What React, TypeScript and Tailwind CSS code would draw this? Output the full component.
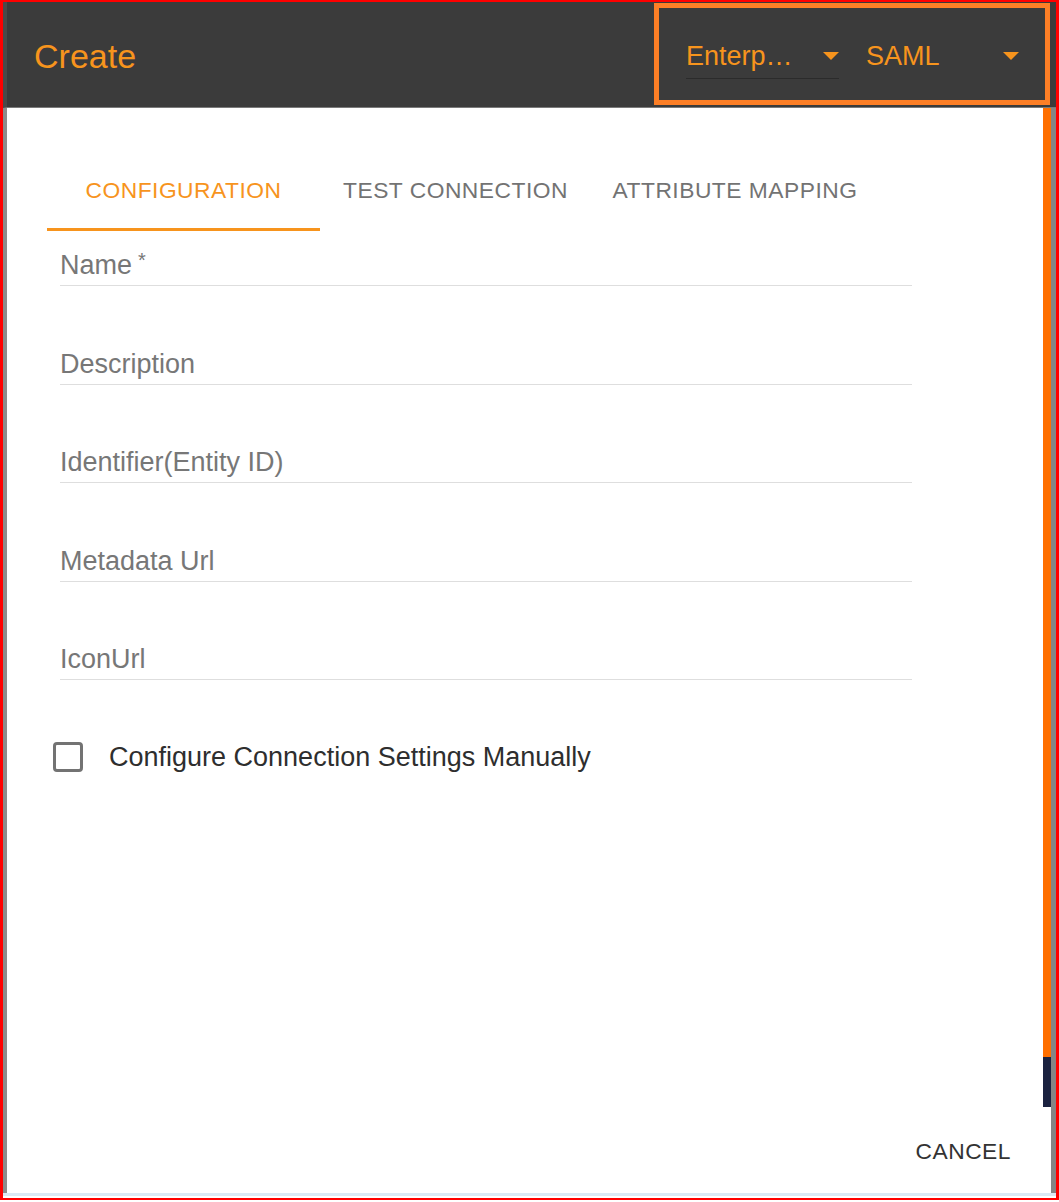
import React from 'react';

const ORANGE = '#f7941d';

function Caret() {
  return (
    <svg width="16" height="8" viewBox="0 0 16 8" className="shrink-0">
      <polygon points="0,0 16,0 8,8" fill={ORANGE} />
    </svg>
  );
}

function HeaderSelect({ value, underline }: { value: string; underline?: boolean }) {
  return (
    <div className={`mt-[4px] flex h-[46px] w-[153px] items-center justify-between ${underline ? 'border-b border-[#2b2b2b]' : ''}`}>
      <span className="whitespace-nowrap text-[27px] leading-[30px] text-[#f7941d]">{value}</span>
      <Caret />
    </div>
  );
}

function Field({ label, required, first }: { label: string; required?: boolean; first?: boolean }) {
  return (
    <div className={`flex flex-col justify-end ${first ? 'h-[55px]' : 'h-[98.5px]'}`}>
      <div className="mb-[5px] text-[27px] leading-[30px] text-[#777777]">
        {label}
        {required && <span className="ml-[6px] align-top text-[20px] leading-[20px]">*</span>}
      </div>
      <div className="h-px w-[852px] bg-[#dedede]" />
    </div>
  );
}

const tabs = [
  { label: 'CONFIGURATION', width: 'w-[273px]', active: true },
  { label: 'TEST CONNECTION', width: 'w-[271px]', active: false },
  { label: 'ATTRIBUTE MAPPING', width: 'w-[288px]', active: false },
];

export default function App() {
  return (
    <div
      className="flex h-[1200px] w-[1059px] flex-col border-b-2 border-l-[3px] border-r-[3px] border-t-2 border-[#ff0000] bg-white"
      style={{ fontFamily: '"Liberation Sans", Arial, sans-serif' }}
    >
      {/* header bar */}
      <header className="flex h-[106px] shrink-0 items-start justify-between border-b border-[#7a7a7a] border-l-[4px] border-l-[#4a4a4a] bg-[#3b3b3b]">
        <h1 className="self-center pl-[27px] pt-[3px] text-[34px] leading-[40px] text-[#f7941d]">Create</h1>
        <div className="mr-[6px] mt-[1px] flex h-[102px] items-center gap-[27px] border-[5px] border-[#fd7f26] pl-[27px] pr-[26px]">
          <HeaderSelect value="Enterp…" underline />
          <HeaderSelect value="SAML" />
        </div>
      </header>

      <div className="flex min-h-0 flex-1">
        <div className="w-[4px] shrink-0 bg-[#8c8c8c]" />

        <main className="relative flex flex-1 flex-col">
          <div className="ml-[40px] mt-[44px] flex">
            {tabs.map((t) => (
              <div
                key={t.label}
                className={`flex h-[79px] ${t.width} items-center justify-center border-b-[3px] text-[22.8px] tracking-[0.5px] ${
                  t.active ? 'border-[#f7941d] text-[#f7941d]' : 'border-transparent text-[#737373]'
                }`}
              >
                {t.label}
              </div>
            ))}
          </div>

          <div className="ml-[53px] flex flex-col">
            <Field label="Name" required first />
            <Field label="Description" />
            <Field label="Identifier(Entity ID)" />
            <Field label="Metadata Url" />
            <Field label="IconUrl" />
          </div>

          <label className="ml-[46px] mt-[62px] flex items-center gap-[26px]">
            <span className="h-[30px] w-[30px] rounded-[4px] border-[3px] border-[#737373]" />
            <span className="text-[27px] leading-[30px] text-[#2e2e2e]">Configure Connection Settings Manually</span>
          </label>

          <div className="mt-auto flex justify-end pb-[28px] pr-[32px]">
            <button className="text-[22.8px] leading-[28px] tracking-[0.5px] text-[#333333]">CANCEL</button>
          </div>
        </main>

        <div className="flex w-[8px] shrink-0 flex-col">
          <div className="h-[949px] bg-[#ff6f00]" />
          <div className="h-[50px] bg-[#1b2240]" />
        </div>
        <div className="w-[5px] shrink-0 bg-[#858585]" />
      </div>

      <div className="h-[3px] shrink-0 bg-[#dbe9f4]" />
      <div className="h-[2px] shrink-0 bg-white" />
    </div>
  );
}
